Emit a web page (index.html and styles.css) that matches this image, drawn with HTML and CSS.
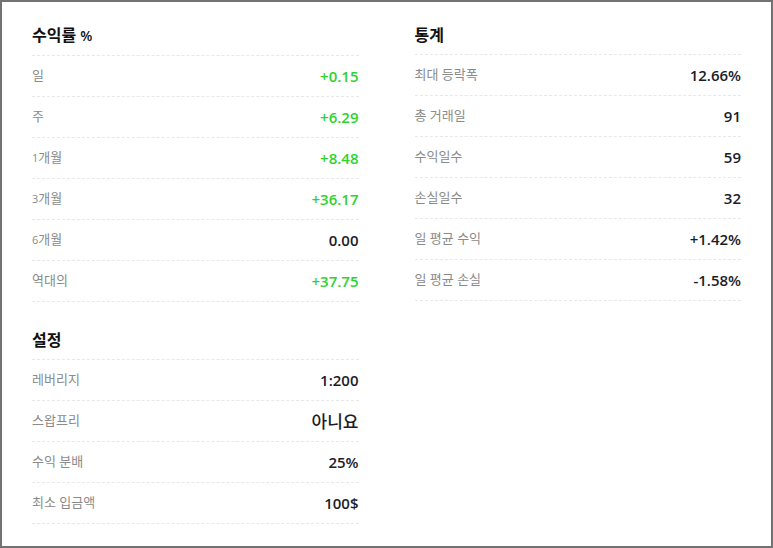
FILE: index.html
```html
<!DOCTYPE html>
<html lang="ko">
    <head>
        <meta charset="utf-8">
        <title>수익률</title>
        <link rel="stylesheet" href="styles.css">
    </head>
    <body>
        <div class="frame">

            <div class="column">
                <h2 class="heading">수익률 <span class="unit">%</span></h2>
                <div class="row"><span class="label">일</span><span class="value up">+0.15</span></div>
                <div class="row"><span class="label">주</span><span class="value up">+6.29</span></div>
                <div class="row"><span class="label"><small>1</small>개월</span><span class="value up">+8.48</span></div>
                <div class="row"><span class="label"><small>3</small>개월</span><span class="value up">+36.17</span></div>
                <div class="row"><span class="label"><small>6</small>개월</span><span class="value">0.00</span></div>
                <div class="row"><span class="label">역대의</span><span class="value up">+37.75</span></div>

                <h2 class="heading next">설정</h2>
                <div class="row"><span class="label">레버리지</span><span class="value">1:200</span></div>
                <div class="row"><span class="label">스왑프리</span><span class="value big">아니요</span></div>
                <div class="row"><span class="label">수익 분배</span><span class="value">25%</span></div>
                <div class="row"><span class="label">최소 입금액</span><span class="value">100$</span></div>
            </div>

            <div class="column">
                <h2 class="heading">통계</h2>
                <div class="row"><span class="label">최대 등락폭</span><span class="value">12.66%</span></div>
                <div class="row"><span class="label">총 거래일</span><span class="value">91</span></div>
                <div class="row"><span class="label">수익일수</span><span class="value">59</span></div>
                <div class="row"><span class="label">손실일수</span><span class="value">32</span></div>
                <div class="row"><span class="label">일 평균 수익</span><span class="value">+1.42%</span></div>
                <div class="row"><span class="label">일 평균 손실</span><span class="value">-1.58%</span></div>
            </div>

        </div>
    </body>
</html>
```

FILE: styles.css
```css
body{
    margin: 0;
    background: white;
}

.frame{
    box-sizing: border-box;
    width: 773px;
    height: 548px;
    border: 2px solid #737373;
    padding: 20px 30px 0 30px;
    display: grid;
    grid-template-columns: 1fr 1fr;
    column-gap: 56px;
    align-items: start;
    font-family: "Open Sans", "Noto Sans CJK KR", sans-serif;
}

.heading{
    margin: 0;
    font-size: 16px;
    font-weight: bold;
    line-height: 24px;
    color: #111;
    padding-top: 1px;
    padding-bottom: 7px;
    border-bottom: 1px dashed #e8e8e8;
}

.heading.next{
    margin-top: 25px;
}

.unit{
    font-size: 14px;
    font-weight: 600;
}

.row{
    display: flex;
    justify-content: space-between;
    align-items: center;
    height: 40px;
    border-bottom: 1px dashed #e8e8e8;
}

.label{
    font-size: 13px;
    color: #8a8a8a;
    margin-top: -3px;
}

.label small{
    font-size: 11px;
}

.value{
    font-size: 15px;
    font-weight: 600;
    color: #1c1c28;
    margin-top: -1px;
}

.value.big{
    font-size: 17px;
    font-weight: 500;
}

.value.up{
    color: #2fd22f;
}
```
